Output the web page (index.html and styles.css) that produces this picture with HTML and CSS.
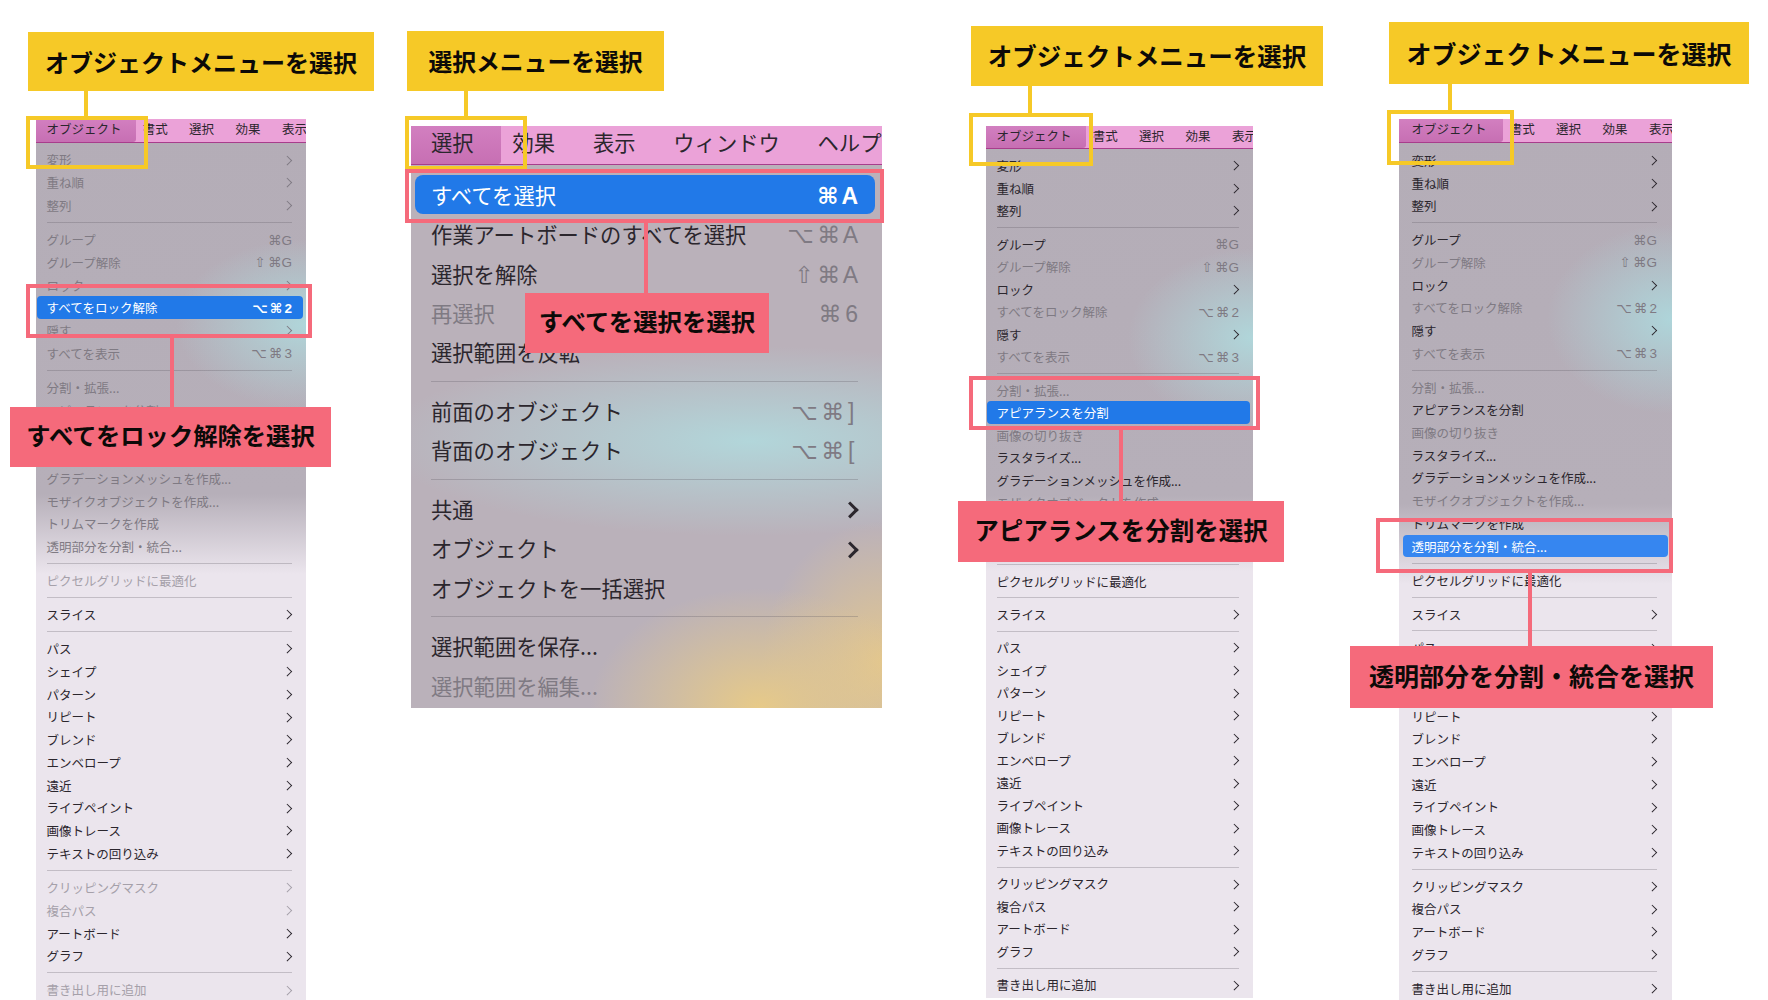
FILE: index.html

```html
<!DOCTYPE html>
<html lang="ja">
  <head>
    <meta charset="UTF-8" />
    <title>メニュー操作の手順</title>
    <link rel="stylesheet" href="styles.css">
  </head>
  <body>
  <div class="canvas">

    <!-- step 1 -->
    <div class="shot shot-a">
      <div class="bar">
        <span class="on">オブジェクト</span><span>書式</span><span>選択</span><span>効果</span><span>表示</span>
      </div>
      <ul class="menu">
        <li class="off sub">変形</li>
        <li class="off sub">重ね順</li>
        <li class="off sub">整列</li>
        <li class="sep"></li>
        <li class="off">グループ<span class="key">⌘G</span></li>
        <li class="off">グループ解除<span class="key">⇧ ⌘G</span></li>
        <li class="off sub">ロック</li>
        <li class="sel">すべてをロック解除<span class="key">⌥ ⌘ 2</span></li>
        <li class="off sub">隠す</li>
        <li class="off">すべてを表示<span class="key">⌥ ⌘ 3</span></li>
        <li class="sep"></li>
        <li class="off">分割・拡張...</li>
        <li class="off">アピアランスを分割</li>
        <li class="off">画像の切り抜き</li>
        <li class="off">ラスタライズ...</li>
        <li class="off">グラデーションメッシュを作成...</li>
        <li class="off">モザイクオブジェクトを作成...</li>
        <li class="off">トリムマークを作成</li>
        <li class="off">透明部分を分割・統合...</li>
        <li class="sep"></li>
        <li class="off">ピクセルグリッドに最適化</li>
        <li class="sep"></li>
        <li class="sub">スライス</li>
        <li class="sep"></li>
        <li class="sub">パス</li>
        <li class="sub">シェイプ</li>
        <li class="sub">パターン</li>
        <li class="sub">リピート</li>
        <li class="sub">ブレンド</li>
        <li class="sub">エンベロープ</li>
        <li class="sub">遠近</li>
        <li class="sub">ライブペイント</li>
        <li class="sub">画像トレース</li>
        <li class="sub">テキストの回り込み</li>
        <li class="sep"></li>
        <li class="off sub">クリッピングマスク</li>
        <li class="off sub">複合パス</li>
        <li class="sub">アートボード</li>
        <li class="sub">グラフ</li>
        <li class="sep"></li>
        <li class="off sub">書き出し用に追加</li>
      </ul>
    </div>
    <div class="stem stem-yellow a-stem1"></div>
    <div class="stem stem-pink a-stem2"></div>
    <div class="frame frame-yellow a-frame1"></div>
    <div class="frame frame-pink a-frame2"></div>
    <div class="tag tag-yellow a-tag1">オブジェクトメニューを選択</div>
    <div class="tag tag-pink a-tag2">すべてをロック解除を選択</div>

    <!-- step 2 -->
    <div class="shot shot-b">
      <div class="bar">
        <span class="on">選択</span><span>効果</span><span>表示</span><span>ウィンドウ</span><span>ヘルプ</span>
      </div>
      <ul class="menu">
        <li class="sel">すべてを選択<span class="key">⌘ A</span></li>
        <li>作業アートボードのすべてを選択<span class="key">⌥ ⌘ A</span></li>
        <li>選択を解除<span class="key">⇧ ⌘ A</span></li>
        <li class="off">再選択<span class="key">⌘ 6</span></li>
        <li>選択範囲を反転</li>
        <li class="sep"></li>
        <li>前面のオブジェクト<span class="key">⌥ ⌘ ]&nbsp;</span></li>
        <li>背面のオブジェクト<span class="key">⌥ ⌘ [&nbsp;</span></li>
        <li class="sep"></li>
        <li class="sub">共通</li>
        <li class="sub">オブジェクト</li>
        <li>オブジェクトを一括選択</li>
        <li class="sep"></li>
        <li>選択範囲を保存...</li>
        <li class="off">選択範囲を編集...</li>
      </ul>
    </div>
    <div class="stem stem-yellow b-stem1"></div>
    <div class="stem stem-pink b-stem2"></div>
    <div class="frame frame-yellow b-frame1"></div>
    <div class="frame frame-pink b-frame2"></div>
    <div class="tag tag-yellow b-tag1">選択メニューを選択</div>
    <div class="tag tag-pink b-tag2">すべてを選択を選択</div>

    <!-- step 3 -->
    <div class="shot shot-c">
      <div class="bar">
        <span class="on">オブジェクト</span><span>書式</span><span>選択</span><span>効果</span><span>表示</span>
      </div>
      <ul class="menu">
        <li class="sub">変形</li>
        <li class="sub">重ね順</li>
        <li class="sub">整列</li>
        <li class="sep"></li>
        <li>グループ<span class="key">⌘G</span></li>
        <li class="off">グループ解除<span class="key">⇧ ⌘G</span></li>
        <li class="sub">ロック</li>
        <li class="off">すべてをロック解除<span class="key">⌥ ⌘ 2</span></li>
        <li class="sub">隠す</li>
        <li class="off">すべてを表示<span class="key">⌥ ⌘ 3</span></li>
        <li class="sep"></li>
        <li class="off">分割・拡張...</li>
        <li class="sel">アピアランスを分割</li>
        <li class="off">画像の切り抜き</li>
        <li>ラスタライズ...</li>
        <li>グラデーションメッシュを作成...</li>
        <li class="off">モザイクオブジェクトを作成...</li>
        <li>トリムマークを作成</li>
        <li>透明部分を分割・統合...</li>
        <li class="sep"></li>
        <li>ピクセルグリッドに最適化</li>
        <li class="sep"></li>
        <li class="sub">スライス</li>
        <li class="sep"></li>
        <li class="sub">パス</li>
        <li class="sub">シェイプ</li>
        <li class="sub">パターン</li>
        <li class="sub">リピート</li>
        <li class="sub">ブレンド</li>
        <li class="sub">エンベロープ</li>
        <li class="sub">遠近</li>
        <li class="sub">ライブペイント</li>
        <li class="sub">画像トレース</li>
        <li class="sub">テキストの回り込み</li>
        <li class="sep"></li>
        <li class="sub">クリッピングマスク</li>
        <li class="sub">複合パス</li>
        <li class="sub">アートボード</li>
        <li class="sub">グラフ</li>
        <li class="sep"></li>
        <li class="sub">書き出し用に追加</li>
      </ul>
    </div>
    <div class="stem stem-yellow c-stem1"></div>
    <div class="stem stem-pink c-stem2"></div>
    <div class="frame frame-yellow c-frame1"></div>
    <div class="frame frame-pink c-frame2"></div>
    <div class="tag tag-yellow c-tag1">オブジェクトメニューを選択</div>
    <div class="tag tag-pink c-tag2">アピアランスを分割を選択</div>

    <!-- step 4 -->
    <div class="shot shot-d">
      <div class="bar">
        <span class="on">オブジェクト</span><span>書式</span><span>選択</span><span>効果</span><span>表示</span>
      </div>
      <ul class="menu">
        <li class="sub">変形</li>
        <li class="sub">重ね順</li>
        <li class="sub">整列</li>
        <li class="sep"></li>
        <li>グループ<span class="key">⌘G</span></li>
        <li class="off">グループ解除<span class="key">⇧ ⌘G</span></li>
        <li class="sub">ロック</li>
        <li class="off">すべてをロック解除<span class="key">⌥ ⌘ 2</span></li>
        <li class="sub">隠す</li>
        <li class="off">すべてを表示<span class="key">⌥ ⌘ 3</span></li>
        <li class="sep"></li>
        <li class="off">分割・拡張...</li>
        <li>アピアランスを分割</li>
        <li class="off">画像の切り抜き</li>
        <li>ラスタライズ...</li>
        <li>グラデーションメッシュを作成...</li>
        <li class="off">モザイクオブジェクトを作成...</li>
        <li>トリムマークを作成</li>
        <li class="sel">透明部分を分割・統合...</li>
        <li class="sep"></li>
        <li>ピクセルグリッドに最適化</li>
        <li class="sep"></li>
        <li class="sub">スライス</li>
        <li class="sep"></li>
        <li class="sub">パス</li>
        <li class="sub">シェイプ</li>
        <li class="sub">パターン</li>
        <li class="sub">リピート</li>
        <li class="sub">ブレンド</li>
        <li class="sub">エンベロープ</li>
        <li class="sub">遠近</li>
        <li class="sub">ライブペイント</li>
        <li class="sub">画像トレース</li>
        <li class="sub">テキストの回り込み</li>
        <li class="sep"></li>
        <li class="sub">クリッピングマスク</li>
        <li class="sub">複合パス</li>
        <li class="sub">アートボード</li>
        <li class="sub">グラフ</li>
        <li class="sep"></li>
        <li class="sub">書き出し用に追加</li>
      </ul>
    </div>
    <div class="stem stem-yellow d-stem1"></div>
    <div class="stem stem-pink d-stem2"></div>
    <div class="frame frame-yellow d-frame1"></div>
    <div class="frame frame-pink d-frame2"></div>
    <div class="tag tag-yellow d-tag1">オブジェクトメニューを選択</div>
    <div class="tag tag-pink d-tag2">透明部分を分割・統合を選択</div>

  </div>
  </body>
</html>
```

FILE: styles.css

```css
body {
  margin: 0;
  background: #fff;
  font-family: "Noto Sans CJK JP", "DejaVu Sans", sans-serif;
}
.canvas {
  position: relative;
  width: 1768px;
  height: 1000px;
  overflow: hidden;
}

/* menu screenshots */
.shot {
  position: absolute;
  overflow: hidden;
  font-size: var(--font);
  color: #2b262d;
  --font: 12.5px;
  --row: 22.75px;
  --gap: 11.3px;
  --bar: 24px;
  --pad-l: 10.5px;
  --pad-r: 14px;
  --sel-l: 1px;
  --sel-r: 3px;
  --bar-gap: 10.7px;
  --bar-lift: 4px;
  --top: 5.6px;
}
.shot-a {
  left: 36px;
  top: 119px;
  width: 270px;
  height: 881px;
  background:
    radial-gradient(130px 85px at 100% 205px, #b0d6da, rgba(176, 214, 218, 0)),
    linear-gradient(#b4adb7 0, #b6afb9 375px, #ebe5ed 455px);
}
.shot-b {
  left: 411px;
  top: 126px;
  width: 471px;
  height: 582px;
  background:
    radial-gradient(170px 120px at 74% 100%, #e7ca88, rgba(231, 202, 136, 0)),
    radial-gradient(120px 140px at 100% 92%, #e2c68f, rgba(226, 198, 143, 0)),
    radial-gradient(370px 95px at 72% 315px, #b2d6da, rgba(178, 214, 218, 0)),
    #bab1ba;
  --font: 21.3px;
  --row: 39.3px;
  --gap: 19.5px;
  --bar: 39px;
  --pad-l: 20px;
  --pad-r: 24px;
  --sel-l: 4px;
  --sel-r: 7px;
  --bar-gap: 18.9px;
  --bar-lift: 7px;
  --top: 9.85px;
}
.shot-c {
  left: 986px;
  top: 126px;
  width: 267px;
  height: 872px;
  background:
    radial-gradient(125px 90px at 100% 212px, #b0d6da, rgba(176, 214, 218, 0)),
    linear-gradient(#b4adb7 0, #b6afb9 370px, #ebe5ed 445px);
  --row: 22.54px;
  --gap: 10.8px;
  --bar: 23px;
  --top: 5.4px;
}
.shot-d {
  left: 1399px;
  top: 119px;
  width: 273px;
  height: 881px;
  background:
    radial-gradient(125px 95px at 100% 200px, #aed5da, rgba(174, 213, 218, 0)),
    linear-gradient(#b4adb7 0, #b6afb9 385px, #ebe5ed 465px);
  --row: 22.7px;
  --gap: 11.3px;
  --pad-l: 12.5px;
  --pad-r: 15px;
  --sel-l: 4px;
  --sel-r: 4px;
  --top: 6.1px;
}

.bar {
  display: flex;
  height: var(--bar);
  line-height: calc(var(--bar) - var(--bar-lift));
  background: #eba2d8;
  border-bottom: 1.5px solid #a83d8c;
  box-sizing: border-box;
  white-space: nowrap;
}
.bar span {
  padding: 0 var(--bar-gap);
  flex: none;
}
.bar .on {
  background: linear-gradient(#d27fc0, #c76fb3);
  border-radius: 0 0 3px 0;
  padding: 0 calc(var(--pad-l) * 1.35) 0 var(--pad-l);
  margin-right: calc(var(--pad-l) * -0.35);
}

.menu {
  list-style: none;
  margin: 0;
  padding: var(--top) 0 0;
}
.menu li {
  display: flex;
  justify-content: space-between;
  align-items: center;
  height: var(--row);
  padding: 0 var(--pad-r) 0 var(--pad-l);
  white-space: nowrap;
}
.menu .off {
  color: #7f7a83;
}
.shot-a .off:nth-last-child(-n+21) {
  color: #a5a0a9;
}
.menu li.sep {
  height: var(--gap);
  padding: 0;
  margin: 0 var(--pad-r) 0 var(--pad-l);
  background: linear-gradient(rgba(90, 85, 95, .28), rgba(90, 85, 95, .28)) center / 100% 1px no-repeat;
}
.menu li.sel {
  margin: 0 var(--sel-r) 0 var(--sel-l);
  padding: 0 calc(var(--pad-r) - var(--sel-r)) 0 calc(var(--pad-l) - var(--sel-l));
  border-radius: 4px;
  background: #2179e8;
  color: #fff;
}
.shot-b .menu li.sel {
  border-radius: 8px;
}
.shot-d .menu li.sel {
  background: #3686f0;
}

.key {
  font-family: "Liberation Sans", "DejaVu Sans", sans-serif;
  font-size: 1.08em;
  word-spacing: -.12em;
  color: #7f7a83;
}
.shot-b .key {
  margin-top: 4px;
}
.shot-a .off:nth-last-child(-n+21) .key {
  color: inherit;
}
.sel .key {
  color: #fff;
  font-weight: bold;
}

/* submenu chevron */
.sub::after {
  content: "";
  width: calc(var(--font) * .44);
  height: calc(var(--font) * .44);
  margin-right: calc(var(--font) * .1);
  border-top: 1.9px solid currentColor;
  border-right: 1.9px solid currentColor;
  transform: rotate(45deg);
}
.shot-b .sub::after {
  border-width: 3px;
  margin-top: 4px;
}

/* annotations over the screenshots */
.tag {
  position: absolute;
  display: flex;
  align-items: center;
  justify-content: center;
  box-sizing: border-box;
  font-weight: bold;
  font-size: 24px;
  color: #0c0a08;
  white-space: nowrap;
}
.tag-yellow {
  background: #f6c927;
  padding-bottom: 1px;
}
.tag-pink {
  background: #f56a7b;
  padding-bottom: 5px;
}
.frame {
  position: absolute;
  box-sizing: border-box;
  border: 4px solid;
}
.frame-yellow {
  border-color: #f6c927;
}
.frame-pink {
  border-color: #f56a7b;
}
.stem {
  position: absolute;
  width: 4px;
}
.stem-yellow {
  background: #f6c927;
}
.stem-pink {
  background: #f56a7b;
}

.a-tag1 { left: 28px; top: 32px; width: 346px; height: 59px; }
.a-tag2 { left: 10px; top: 407px; width: 321px; height: 60px; font-size: 24.3px; }
.a-frame1 { left: 26px; top: 116px; width: 122px; height: 53px; }
.a-frame2 { left: 26px; top: 284px; width: 286px; height: 54px; }
.a-stem1 { left: 84px; top: 91px; height: 25px; }
.a-stem2 { left: 170px; top: 338px; height: 69px; }

.b-tag1 { left: 407px; top: 31px; width: 257px; height: 60px; font-size: 23.8px; }
.b-tag2 { left: 525px; top: 293px; width: 244px; height: 60px; font-size: 24.4px; }
.b-frame1 { left: 405px; top: 116px; width: 122px; height: 54px; }
.b-frame2 { left: 405px; top: 169px; width: 479px; height: 54px; }
.b-stem1 { left: 464px; top: 91px; height: 25px; }
.b-stem2 { left: 644px; top: 223px; height: 70px; }

.c-tag1 { left: 971px; top: 26px; width: 352px; height: 60px; font-size: 24.5px; }
.c-tag2 { left: 958px; top: 501px; width: 326px; height: 61px; font-size: 24.5px; }
.c-frame1 { left: 969px; top: 113px; width: 124px; height: 53px; }
.c-frame2 { left: 969px; top: 376px; width: 291px; height: 54px; }
.c-stem1 { left: 1028px; top: 86px; height: 27px; }
.c-stem2 { left: 1119px; top: 430px; height: 71px; }

.d-tag1 { left: 1389px; top: 22px; width: 360px; height: 62px; font-size: 25px; }
.d-tag2 { left: 1350px; top: 646px; width: 363px; height: 62px; font-size: 25px; }
.d-frame1 { left: 1387px; top: 110px; width: 127px; height: 55px; }
.d-frame2 { left: 1376px; top: 518px; width: 297px; height: 55px; }
.d-stem1 { left: 1448px; top: 84px; height: 26px; }
.d-stem2 { left: 1528px; top: 573px; height: 73px; }
```
